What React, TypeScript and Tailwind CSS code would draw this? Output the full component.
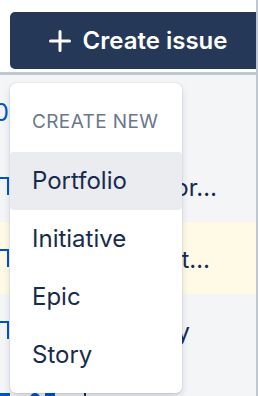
import React from 'react';

const menuItems = ['Portfolio', 'Initiative', 'Epic', 'Story'];

// background rows peeking out around the open menu
const rows = [
  { id: 1, h: 'h-[75px]', bg: '', keyText: 'PF-10', title: '', pr: 'pr-[40px]' },
  { id: 2, h: 'h-[72px]', bg: '', keyText: '', title: 'for…', pr: 'pr-[39px]' },
  { id: 3, h: 'h-[72px]', bg: 'bg-[#fffae6]', keyText: '', title: 'Pilot…', pr: 'pr-[46px]' },
  { id: 4, h: 'h-[72px]', bg: '', keyText: '', title: 'Study', pr: 'pr-[66px]' },
];

const CreateMenu = () => (
  <div className="absolute left-[10px] top-[83px] w-[172px] rounded-[6px] bg-white py-[9px] shadow-[0_4px_8px_-2px_rgba(9,30,66,0.25),0_0_1px_rgba(9,30,66,0.31)]">
    <div className="flex h-[60px] items-center whitespace-nowrap pl-[22px] text-[19px] tracking-[0.02em] text-[#6b778c]">
      CREATE NEW
    </div>
    {menuItems.map((item) => (
      <div
        key={item}
        className={`flex h-[58px] items-center px-[22px] text-[24px] text-[#172b4d] ${
          item === 'Portfolio' ? 'rounded-[4px] bg-[#ebecf0]' : ''
        }`}
      >
        {item}
      </div>
    ))}
  </div>
);

export default function App() {
  return (
    <div className="relative flex h-[396px] w-[258px] overflow-hidden bg-white font-['Inter','Noto_Sans',sans-serif]">
      <div className="flex min-w-0 flex-1 flex-col overflow-hidden">
        <header className="h-[75px] shrink-0 border-b-[3px] border-[#c1c7d0] bg-white pl-[10px] pt-[12px]">
          <button className="flex h-[57px] w-[256px] shrink-0 items-center justify-center gap-[12px] rounded-[5px] bg-[#253858] text-[24px] font-semibold text-white">
            <svg width="22" height="22" viewBox="0 0 22 22" fill="none">
              <path d="M11 1.5v19M1.5 11h19" stroke="currentColor" strokeWidth="3" strokeLinecap="round" />
            </svg>
            Create issue
          </button>
        </header>

        <div className="flex-1 bg-[#f4f5f7]">
          {rows.map((row) => (
            <div key={row.id} className={`flex items-center ${row.h} ${row.bg}`}>
              <div className="flex w-[9px] shrink-0 justify-end">
                {row.keyText ? (
                  <span className="shrink-0 whitespace-nowrap text-[24px] text-[#0052cc]">{row.keyText}</span>
                ) : (
                  <span className="h-[18px] w-[10px] shrink-0 border-r-2 border-t-2 border-[#0052cc]" />
                )}
              </div>
              <div className={`ml-[8px] flex min-w-0 flex-1 justify-end overflow-hidden pt-[4px] ${row.pr}`}>
                <span className="shrink-0 whitespace-nowrap text-[24px] text-[#172b4d]">{row.title}</span>
              </div>
            </div>
          ))}
          <div className="flex h-[72px] items-start pt-[27px]">
            <span className="h-[18px] w-[10px] bg-[#0052cc]" />
            <span className="ml-[20px] h-[18px] w-[10px] rounded-t-full bg-[#0052cc]" />
            <span className="ml-[5px] h-[18px] w-[10px] bg-[#0052cc]" />
            <span className="ml-[29px] h-[18px] w-[2px] bg-[#172b4d]" />
          </div>
        </div>
      </div>
      <div className="w-[2px] shrink-0 bg-[#c1c7d0]" />
      <CreateMenu />
    </div>
  );
}
